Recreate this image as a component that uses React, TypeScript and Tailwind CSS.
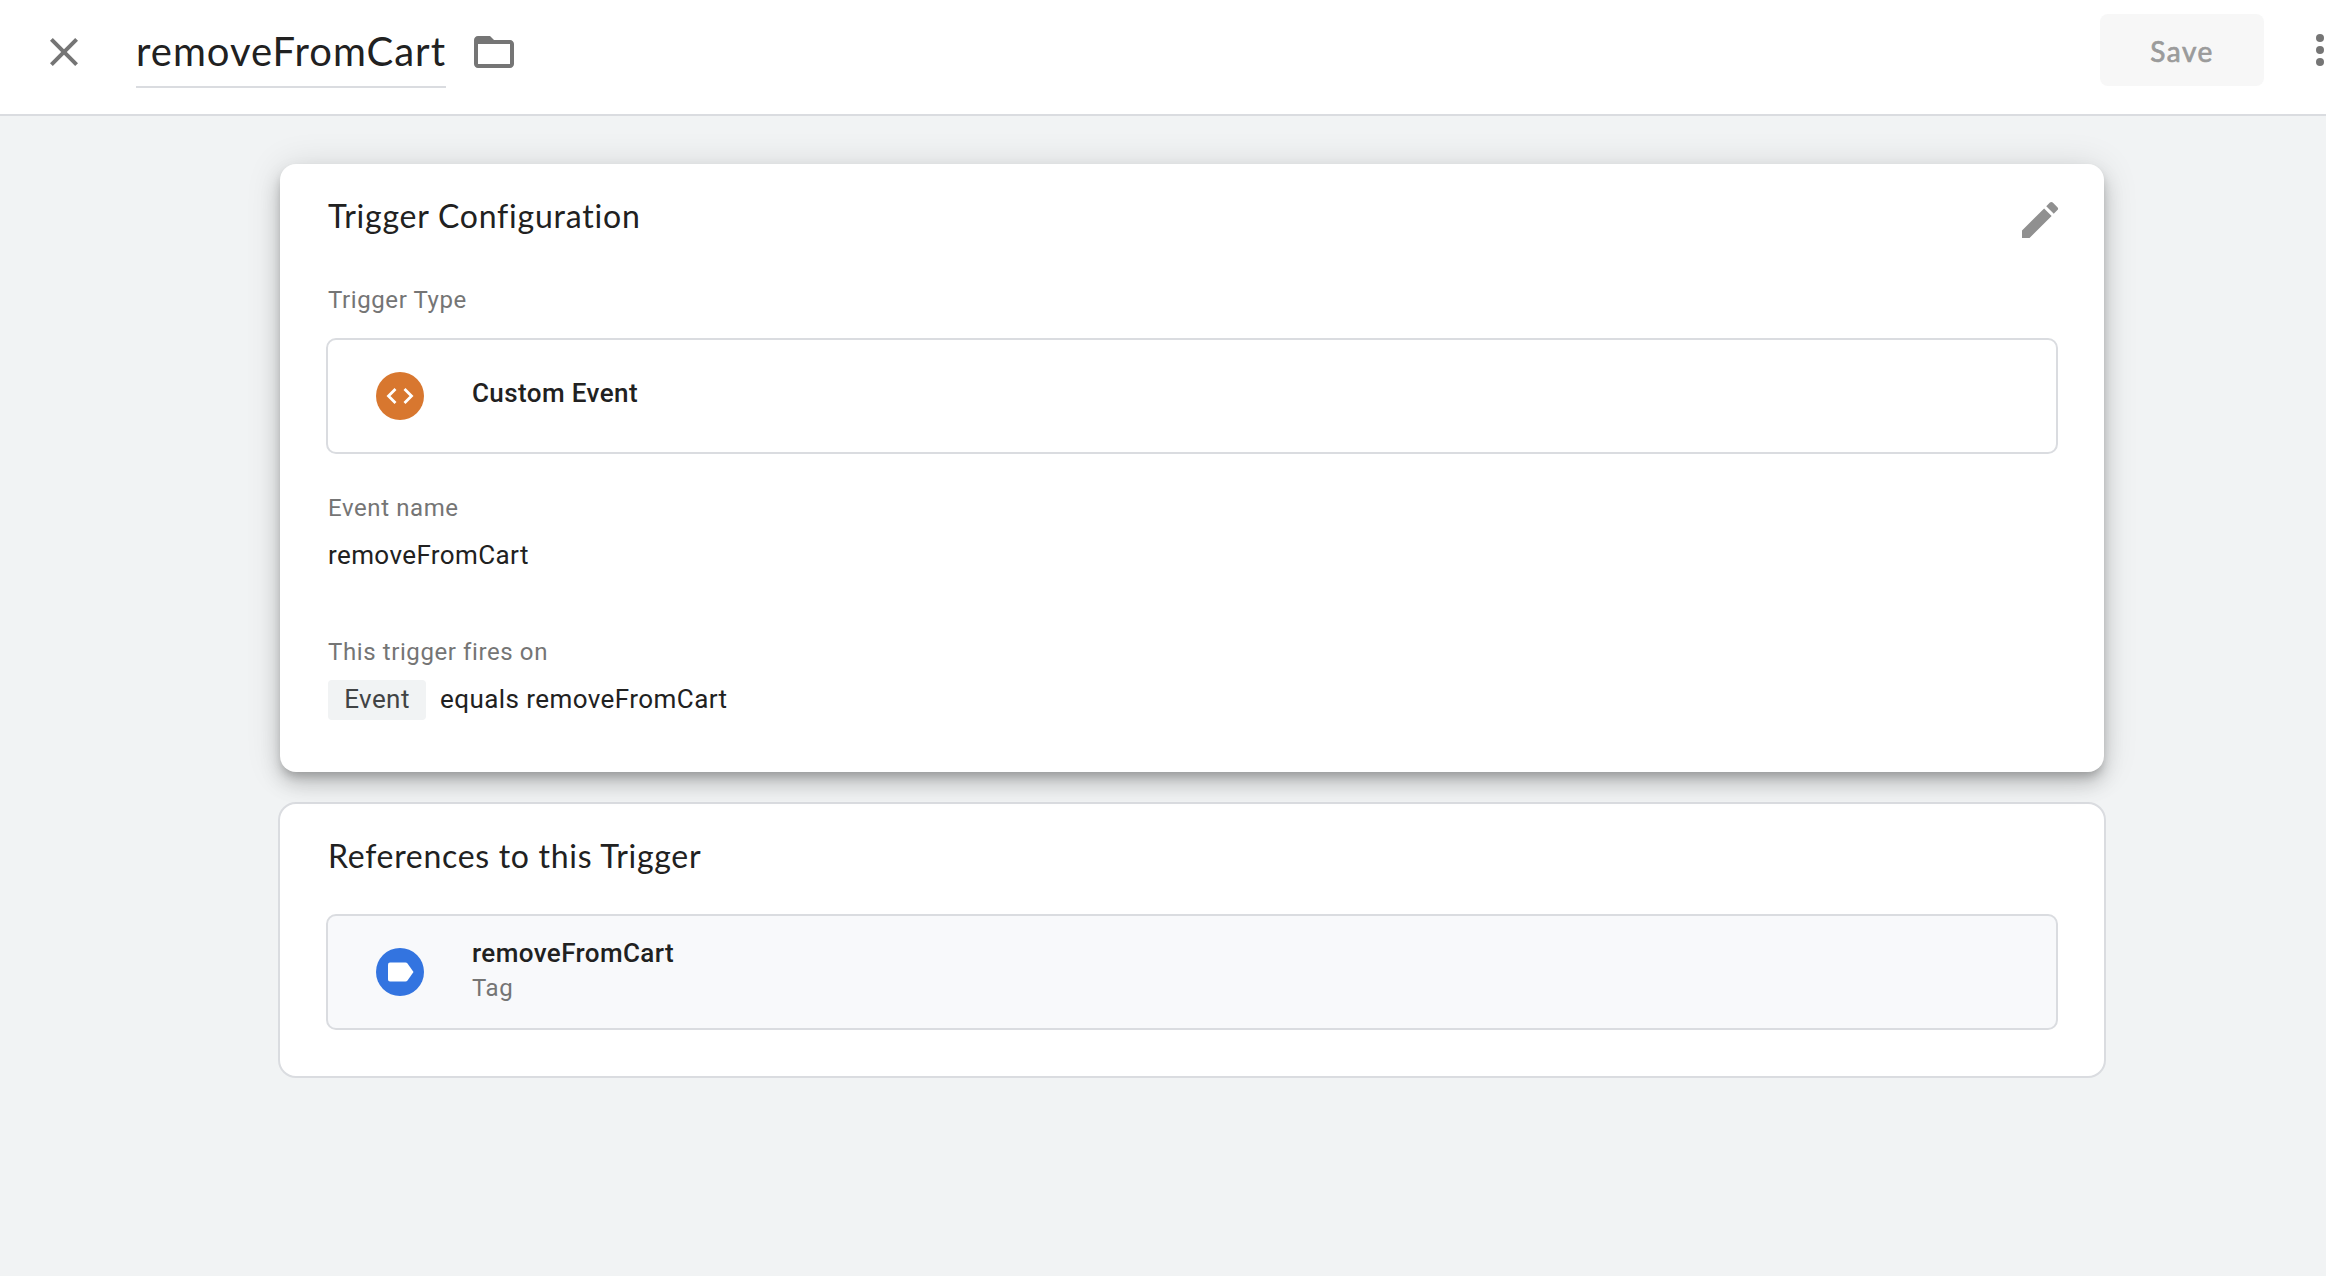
import React from 'react';

function CloseIcon() {
  return (
    <svg viewBox="0 0 24 24" className="block size-12" fill="#757575">
      <path d="M19 6.41 17.59 5 12 10.59 6.41 5 5 6.41 10.59 12 5 17.59 6.41 19 12 13.41 17.59 19 19 17.59 13.41 12z" />
    </svg>
  );
}

function FolderIcon() {
  return (
    <svg viewBox="0 0 24 24" className="block size-12" fill="#757575">
      <path d="M20 6h-8l-2-2H4c-1.1 0-1.99.9-1.99 2L2 18c0 1.1.9 2 2 2h16c1.1 0 2-.9 2-2V8c0-1.1-.9-2-2-2zm0 12H4V8h16v10z" />
    </svg>
  );
}

function EditIcon() {
  return (
    <svg viewBox="0 0 24 24" className="block size-12" fill="#909090">
      <path d="M3 17.25V21h3.75L17.81 9.94l-3.75-3.75L3 17.25zM20.71 7.04a1 1 0 0 0 0-1.41l-2.34-2.34a1 1 0 0 0-1.41 0l-1.83 1.83 3.75 3.75 1.83-1.83z" />
    </svg>
  );
}

function CustomEventIcon() {
  return (
    <svg viewBox="0 0 48 48" className="block size-12 shrink-0">
      <circle cx="24" cy="24" r="24" fill="#d8772f" />
      <path d="M19.5 17 12.5 24l7 7M28.5 17l7 7-7 7" fill="none" stroke="#fff" strokeWidth="2.8" />
    </svg>
  );
}

function TagIcon() {
  return (
    <svg viewBox="0 0 48 48" className="block size-12 shrink-0">
      <circle cx="24" cy="24" r="24" fill="#3374e0" />
      <path d="M14 14.5h15.5c.8 0 1.5.4 2 1L37.500 24l-6 8.500c-.5.6-1.2 1-2 1H14a2 2 0 0 1-2-2v-15a2 2 0 0 1 2-2z" fill="#fff" />
    </svg>
  );
}

function Header() {
  return (
    <header className="flex h-[116px] items-start overflow-hidden border-b-2 border-[#dadce0] bg-white">
      <button className="ml-10 mt-7" aria-label="Close">
        <CloseIcon />
      </button>
      <h1 className="ml-12 mt-[27px] h-[61px] w-[310px] whitespace-nowrap border-b-2 border-[#dadce0] font-[Lato,sans-serif] text-[40px] leading-[48px] tracking-[1.02px] text-[#212121]">
        removeFromCart
      </h1>
      <div className="ml-6 mt-7">
        <FolderIcon />
      </div>
      <button className="ml-auto mt-3.5 h-[72px] w-[164px] rounded-lg bg-[#f7f7f7] pt-0.5 font-[Lato,sans-serif] text-[28px] tracking-[1.5px] text-[#9b9b9b] [-webkit-text-stroke:0.7px_#9b9b9b]">
        Save
      </button>
      <div className="ml-[52px] mr-0.5 mt-[34px] flex flex-col gap-1">
        <span className="size-2 rounded-full bg-[#757575]" />
        <span className="size-2 rounded-full bg-[#757575]" />
        <span className="size-2 rounded-full bg-[#757575]" />
      </div>
    </header>
  );
}

function Label({ children }: { children: React.ReactNode }) {
  return <div className="text-2xl leading-8 tracking-[0.6px] text-[#757575]">{children}</div>;
}

function TriggerCard() {
  return (
    <section className="relative z-10 ml-0.5 flex h-[608px] w-[1824px] flex-col rounded-2xl bg-white px-[46px] pt-8 shadow-[0_6px_10px_-2px_rgba(0,0,0,0.2),0_12px_20px_0_rgba(0,0,0,0.17),0_2px_36px_0_rgba(0,0,0,0.12)]">
      <div className="flex h-10 justify-between">
        <h2 className="pl-0.5 font-[Lato,sans-serif] text-[32px] leading-10 tracking-[0.78px]">Trigger Configuration</h2>
        <button className="-mr-1.5 size-12" aria-label="Edit">
          <EditIcon />
        </button>
      </div>
      <div className="mt-12 pl-0.5">
        <Label>Trigger Type</Label>
      </div>
      <div className="mt-[22px] flex h-[116px] items-center rounded-[10px] border-2 border-[#dadce0] pl-12">
        <CustomEventIcon />
        <div className="ml-12 pb-1.5 text-[26px] font-medium leading-8 tracking-[0.4px]">Custom Event</div>
      </div>
      <div className="mt-[38px] pl-0.5">
        <Label>Event name</Label>
        <div className="mt-[15px] text-[26px] leading-8 tracking-[0.4px]">removeFromCart</div>
      </div>
      <div className="mt-[65px] pl-0.5">
        <Label>This trigger fires on</Label>
        <div className="mt-3 flex h-10 gap-3.5 text-[26px] leading-[38px] tracking-[0.43px]">
          <span className="h-10 w-[98px] rounded bg-[#f1f3f4] text-center text-[#414345]">Event</span>
          <span>equals removeFromCart</span>
        </div>
      </div>
    </section>
  );
}

function ReferencesCard() {
  return (
    <section className="mt-[30px] flex h-[276px] w-[1828px] flex-col rounded-[18px] border-2 border-[#dadce0] bg-white px-[46px] pt-8">
      <h2 className="pl-0.5 font-[Lato,sans-serif] text-[32px] leading-10 tracking-[0.7px]">References to this Trigger</h2>
      <div className="mt-[38px] flex h-[116px] rounded-[10px] border-2 border-[#dadce0] bg-[#f8f9fb] pl-12 pt-8">
        <TagIcon />
        <div className="-mt-[11px] ml-12">
          <div className="text-[26px] font-medium leading-8 tracking-[0.4px]">removeFromCart</div>
          <div className="mt-[3px] text-2xl leading-8 tracking-[0.6px] text-[#757575]">Tag</div>
        </div>
      </div>
    </section>
  );
}

export default function App() {
  return (
    <div className="min-h-screen bg-[#f1f3f4] font-[Roboto,sans-serif] text-[#212121]">
      <Header />
      <main className="ml-[278px] pt-12">
        <TriggerCard />
        <ReferencesCard />
      </main>
    </div>
  );
}
